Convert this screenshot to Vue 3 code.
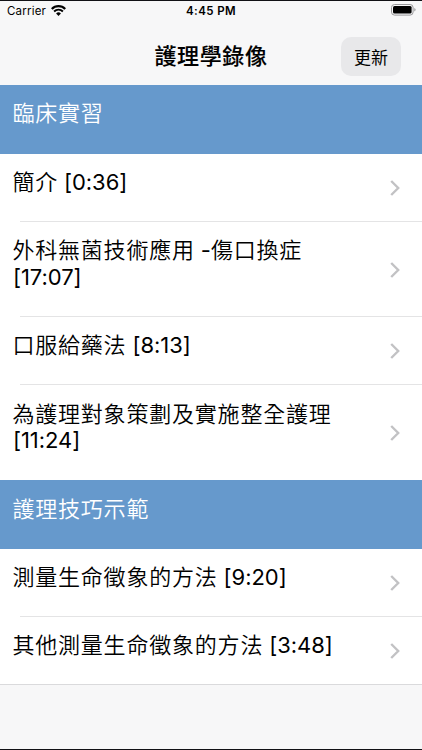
<script setup>
const sections = [
  {
    title: '臨床實習',
    items: [
      { name: '簡介', time: '[0:36]' },
      { name: '外科無菌技術應用', suffix: '-', tail: '傷口換症', time: '[17:07]', tall: true },
      { name: '口服給藥法', time: '[8:13]' },
      { name: '為護理對象策劃及實施整全護理', time: '[11:24]', tall: true },
    ],
  },
  {
    title: '護理技巧示範',
    items: [
      { name: '測量生命徵象的方法', time: '[9:20]' },
      { name: '其他測量生命徵象的方法', time: '[3:48]' },
    ],
  },
]
</script>

<template>
  <div class="screen">
    <div class="status">
      <div class="carrier">
        <span>Carrier</span>
        <svg class="wifi" width="15" height="11" viewBox="0 0 15 11">
          <path d="M.8 4a9.4 9.4 0 0 1 13.4 0" fill="none" stroke="#000" stroke-width="2.3" />
          <path d="M3.1 6.5a6.2 6.2 0 0 1 8.8 0" fill="none" stroke="#000" stroke-width="1.9" />
          <path d="M5.1 8.5a3.4 3.4 0 0 1 4.8 0L7.5 11z" fill="#000" />
        </svg>
      </div>
      <span class="clock">4:45 PM</span>
      <svg class="battery" width="25" height="12" viewBox="0 0 25 12">
        <rect x=".5" y=".5" width="21.6" height="10.6" rx="3" fill="none" stroke="#98989a" />
        <rect x="2" y="2" width="18.6" height="7.6" rx="1.5" fill="#000" />
        <path d="M23.3 4q1.3.5 1.3 1.8t-1.3 1.8z" fill="#98989a" />
      </svg>
    </div>
    <header class="navbar">
      <h1>護理學錄像</h1>
      <button>更新</button>
    </header>
    <main>
      <section v-for="s in sections" :key="s.title">
        <h2>{{ s.title }}</h2>
        <ul>
          <li v-for="i in s.items" :key="i.name" :class="{ tall: i.tall }">
            <div class="label">
              <div class="line">
                <span>{{ i.name }}</span>
                <span v-if="i.suffix" class="latin dash">{{ i.suffix }}</span>
                <span v-if="i.tail">{{ i.tail }}</span>
                <span v-if="!i.tall" class="latin time">{{ i.time }}</span>
              </div>
              <div v-if="i.tall" class="line"><span class="latin wrapped">{{ i.time }}</span></div>
            </div>
            <svg class="chevron" width="12" height="18" viewBox="0 0 12 18">
              <path d="M1.2 2 8.2 9l-7 7" fill="none" stroke="#c2c2c4" stroke-width="2.4" />
            </svg>
          </li>
        </ul>
      </section>
    </main>
  </div>
</template>

<style>
body {
  margin: 0;
  background: #f7f7f8;
}
</style>

<style scoped>
.screen {
  box-sizing: border-box;
  width: 422px;
  height: 750px;
  overflow: hidden;
  display: flex;
  flex-direction: column;
  background: #f7f7f8;
  border-top: 1px solid #111115;
  border-bottom: 1px solid #111115;
  color: #000;
  font-family: Inter, "Noto Sans CJK TC", sans-serif;
}
.status {
  display: grid;
  grid-template-columns: 1fr auto 1fr;
  align-items: center;
  height: 20px;
  padding: 0 7px;
  font-size: 11.5px;
}
.carrier {
  display: flex;
  align-items: center;
  gap: 5px;
  letter-spacing: .2px;
}
.wifi {
  margin-bottom: 2px;
}
.clock {
  font-weight: 600;
  letter-spacing: .4px;
}
.battery {
  justify-self: end;
  margin: 0 -1px 2px 0;
}
.navbar {
  display: grid;
  grid-template-columns: 1fr auto 1fr;
  align-items: center;
  height: 64px;
  padding: 0 21px;
}
h1 {
  grid-column: 2;
  margin: 0;
  padding-top: 5px;
  font-size: 22px;
  line-height: 30px;
  font-weight: 500;
  letter-spacing: .6px;
  -webkit-text-stroke: .1px #000;
}
button {
  justify-self: end;
  width: 60px;
  height: 39px;
  margin-top: 6px;
  padding: 0;
  border: 0;
  border-radius: 10px;
  background: #e8e8ea;
  color: #000;
  font: 400 17px/37px "Noto Sans CJK TC", sans-serif;
}
h2 {
  box-sizing: border-box;
  height: 68.6px;
  margin: 0;
  padding: 15.4px 12.4px 0;
  background: #6699cc;
  color: #fff;
  font-size: 22px;
  line-height: 26.4px;
  font-weight: 350;
  letter-spacing: .8px;
}
ul {
  margin: 0;
  padding: 0;
  list-style: none;
  background: #fff;
}
section:last-child ul {
  box-sizing: border-box;
  height: 136.4px;
  border-bottom: 1px solid #dadadc;
}
li {
  box-sizing: border-box;
  display: flex;
  justify-content: space-between;
  height: 68.3px;
  padding: 15.4px 20px 0 12.4px;
  background: linear-gradient(#e4e4e5, #e4e4e5) 20px 100% / 100% 1px no-repeat;
}
li:last-child {
  background: none;
}
li.tall {
  height: 95px;
}
.line {
  display: flex;
  height: 26.4px;
  font-size: 22px;
  line-height: 26.4px;
  font-weight: 350;
  letter-spacing: .8px;
  white-space: nowrap;
}
.latin {
  font-weight: 400;
  letter-spacing: -.05px;
}
.time,
.dash {
  margin-left: 6px;
}
.wrapped {
  margin-left: .6px;
}
.chevron {
  align-self: center;
  margin-bottom: 15px;
}
</style>
